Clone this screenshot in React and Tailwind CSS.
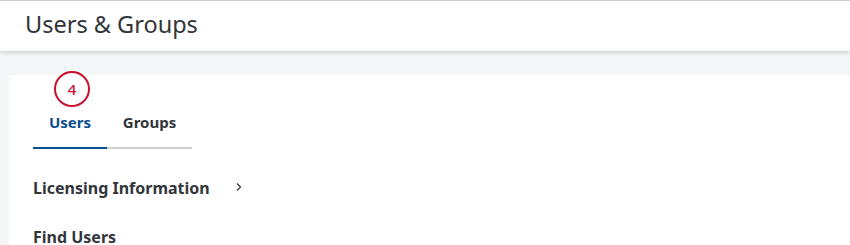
import React from 'react';

export default function App() {
  return (
    <div className="w-[850px] h-[245px] overflow-hidden bg-[#f5f6f7] font-['Noto_Sans',sans-serif] text-[#32363a]">
      <header className="h-[51px] bg-white border-t border-[#d0d0d0] shadow-[0_2px_4px_rgba(0,0,0,0.15)] flex items-center pl-[25px] relative z-10">
        <h1 className="text-[23.5px] leading-none text-[#32363a] -mt-[3px]">Users &amp; Groups</h1>
      </header>

      <div className="pt-[24px] pl-[9px]">
        <div className="bg-white h-[200px] pl-[24px]">
          <div className="relative w-[159px]">
            <div className="absolute left-[21px] -top-[4px] w-[36px] h-[36px] rounded-full border-2 border-[#c8102e] flex items-center justify-center text-[#c8102e] text-[15px] font-medium">
              4
            </div>
            <div className="flex pt-[36px] text-[15px] font-bold">
              <div className="w-[74px] flex flex-col items-center">
                <span className="text-[#0a4f8f] h-[23px] leading-[23px]">Users</span>
                <div className="mt-[13px] h-[2px] w-full bg-[#0a4f8f]" />
              </div>
              <div className="w-[85px] flex flex-col items-center">
                <span className="h-[23px] leading-[23px]">Groups</span>
                <div className="mt-[13px] h-[2px] w-full bg-[#d0d0d0]" />
              </div>
            </div>
          </div>

          <div className="mt-[27px] flex items-center text-[16px] font-bold">
            <span>Licensing Information</span>
            <svg className="ml-[25px] mt-[-3px]" width="8" height="10" viewBox="0 0 8 10" fill="none">
              <path d="M2 1.5 L5.5 5 L2 8.5" stroke="#32363a" strokeWidth="1.2" />
            </svg>
          </div>

          <div className="mt-[25px] text-[16px] font-bold">Find Users</div>
        </div>
      </div>
    </div>
  );
}
